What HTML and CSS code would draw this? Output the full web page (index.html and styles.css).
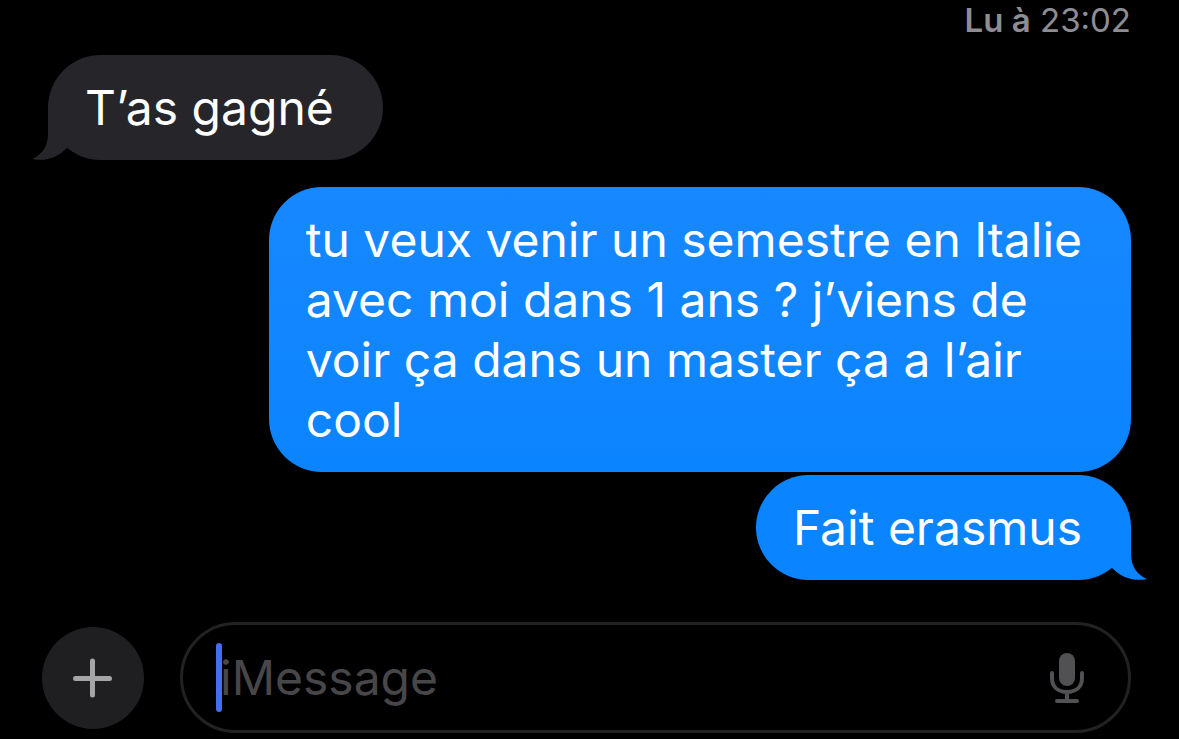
FILE: index.html
```html
<!DOCTYPE html>
<html lang="fr">
<head>
<meta charset="utf-8">
<meta name="viewport" content="width=device-width, initial-scale=1">
<title>iMessage</title>
<link rel="stylesheet" href="styles.css">
</head>
<body class="app">
<main class="thread">
  <p class="receipt"><strong class="receipt-label">Lu à</strong> <time>23:02</time></p>
  <div class="bubble received">
    T’as gagné
    <svg class="tail" viewBox="0 0 48 55" aria-hidden="true"><path d="M16 0V29C16 41 10 50 0 54C14 57 26 52 35 43L48 20Z"/></svg>
  </div>
  <div class="bubble sent long">tu veux venir un semestre en Italie<br>avec moi dans 1 ans ? j’viens de<br>voir ça dans un master ça a l’air<br>cool</div>
  <div class="bubble sent last">
    Fait erasmus
    <svg class="tail" viewBox="0 0 48 55" aria-hidden="true"><path d="M16 0V29C16 41 10 50 0 54C14 57 26 52 35 43L48 20Z"/></svg>
  </div>
</main>
<form class="composer">
  <button class="add" type="button" aria-label="Ajouter">
    <svg class="add-icon" viewBox="0 0 40 40" aria-hidden="true"><path d="M19.5 3V37M2.5 20.5H36.5"/></svg>
  </button>
  <div class="field">
    <span class="caret"></span>
    <input class="message" type="text" placeholder="iMessage" aria-label="Message">
    <button class="dictate" type="button" aria-label="Dicter">
      <svg class="mic-icon" viewBox="0 0 36 52" aria-hidden="true"><rect class="mic-head" x="10" y="1" width="16" height="33" rx="8"/><path class="mic-stand" d="M3 21V26C3 35 9 40 18 40S33 35 33 26V21M18 40V49M8 49H28"/></svg>
    </button>
  </div>
</form>
</body>
</html>
```
FILE: styles.css
```css
* {
  box-sizing: border-box;
}

.app {
  margin: 0;
  background: #000;
  color: #fff;
  font-family: Inter, "Liberation Sans", sans-serif;
  font-size: 48px;
  line-height: 60px;
  overflow: hidden;
}

.thread {
  display: flex;
  flex-direction: column;
  padding: 0 48px;
}

.receipt {
  margin: 0 0 15px;
  align-self: flex-end;
  color: #8d8d93;
  font-size: 33px;
  line-height: 40px;
}

.receipt-label {
  font-weight: 600;
}

.bubble {
  position: relative;
  padding: 23px 49px 22px 37px;
  border-radius: 53px;
  white-space: nowrap;
}

.received {
  align-self: flex-start;
  background: #26252a;
  fill: #26252a;
}

.sent {
  align-self: flex-end;
  background: #0b84ff;
  fill: #0b84ff;
}

.long {
  margin: 27px 0 3px;
  background: linear-gradient(#1788ff, #0b84ff);
}

.tail {
  position: absolute;
  bottom: 0;
  left: -16px;
  width: 48px;
  height: 55px;
}

.last .tail {
  left: auto;
  right: -16px;
  transform: scaleX(-1);
}

.composer {
  display: flex;
  align-items: center;
  gap: 36px;
  padding: 42px 48px 6px 42px;
}

.add {
  display: grid;
  place-items: center;
  flex: none;
  width: 102px;
  height: 102px;
  padding: 0;
  border: 0;
  border-radius: 50%;
  background: #1f1f21;
}

.add-icon {
  width: 40px;
  height: 40px;
  fill: none;
  stroke: #a5a5a8;
  stroke-width: 5;
  stroke-linecap: round;
}

.field {
  position: relative;
  display: flex;
  flex: 1;
  align-items: center;
  min-width: 0;
  padding: 22px 43px 22px 37px;
  border: 3px solid #222223;
  border-radius: 56px;
}

.caret {
  position: absolute;
  left: 33px;
  width: 6px;
  height: 69px;
  border-radius: 3px;
  background: #466cf2;
}

.message {
  flex: 1;
  min-width: 0;
  height: 61px;
  padding: 0;
  border: 0;
  outline: 0;
  background: transparent;
  color: #fff;
  font: inherit;
}

.message::placeholder {
  color: #47474a;
  opacity: 1;
}

.dictate {
  display: flex;
  padding: 0;
  border: 0;
  background: transparent;
}

.mic-icon {
  width: 36px;
  height: 52px;
}

.mic-head {
  fill: #515154;
}

.mic-stand {
  fill: none;
  stroke: #515154;
  stroke-width: 4;
  stroke-linecap: round;
}
```
